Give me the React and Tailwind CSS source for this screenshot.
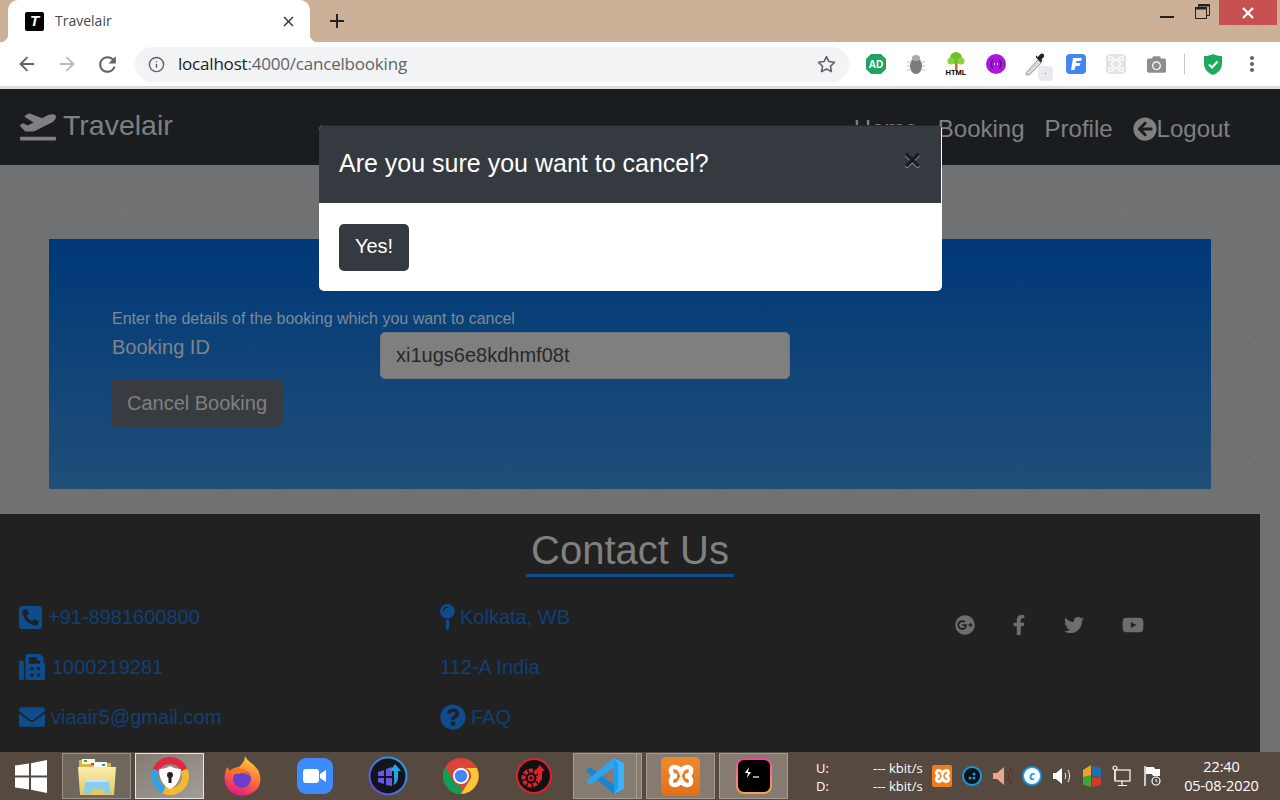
import React from 'react';
import {
  FaPlaneDeparture, FaArrowCircleLeft, FaPhoneSquareAlt, FaFax, FaEnvelope, FaMapPin,
  FaQuestionCircle, FaGooglePlus, FaFacebookF, FaTwitter, FaYoutube, FaCamera,
} from 'react-icons/fa';
import { FiArrowLeft, FiArrowRight, FiStar, FiInfo } from 'react-icons/fi';
import { MdRefresh, MdMoreVert, MdClose, MdAdd } from 'react-icons/md';

const sans = 'font-["Liberation_Sans",Arial,sans-serif]';
const ui = 'font-["Open_Sans","Noto_Sans",sans-serif]';
const bone = 'M14 11C11 4 3 5 4 10C4 14 8 15 10 15C8 15 4 16 4 20C3 25 11 26 14 19C17 26 25 25 24 20C24 16 20 15 18 15C20 15 24 14 24 10C25 5 17 4 14 11Z';

const Ext = ({ children }) => <div className="w-10 h-6 flex items-center justify-center relative">{children}</div>;

const Extensions = () => (
  <div className="flex items-center ml-[7px]">
    <Ext>
      <svg width="22" height="22" viewBox="0 0 22 22">
        <polygon points="6,1 16,1 21,6 21,16 16,21 6,21 1,16 1,6" fill="#1fa463" />
        <text x="11" y="15" textAnchor="middle" fontSize="10" fontWeight="700" fill="#fff" fontFamily="Liberation Sans">AD</text>
      </svg>
    </Ext>
    <Ext>
      <svg width="20" height="22" viewBox="0 0 20 22">
        <ellipse cx="10" cy="13" rx="6" ry="8" fill="#7c7c7c" />
        <ellipse cx="10" cy="5" rx="4" ry="3" fill="#aaa" />
        <path d="M1 9h3M1 13h3M1 17h3M16 9h3M16 13h3M16 17h3" stroke="#bbb" strokeWidth="1" />
      </svg>
    </Ext>
    <Ext>
      <svg width="30" height="26" viewBox="0 0 30 26">
        <rect x="14" y="11" width="2.500" height="8" fill="#b5761f" />
        <circle cx="15" cy="7" r="6" fill="#6fbf2a" />
        <circle cx="10" cy="10" r="3.500" fill="#8fd13f" />
        <circle cx="20" cy="10" r="3.500" fill="#8fd13f" />
        <text x="15" y="24" textAnchor="middle" fontSize="7.500" fontWeight="700" fill="#000" fontFamily="Liberation Sans">HTML</text>
      </svg>
    </Ext>
    <Ext>
      <svg width="20" height="20" viewBox="0 0 20 20">
        <circle cx="10" cy="10" r="10" fill="#a917e0" />
        <path d="M7 6c-2 0-1 4-2.500 4C6 10 5 14 7 14M13 6c2 0 1 4 2.500 4-1.500 0-.5 4-2.500 4" stroke="#3b0a52" strokeWidth="1.200" fill="none" />
        <path d="M8 10h1M11 10h1" stroke="#fff" strokeWidth="1.400" />
      </svg>
    </Ext>
    <Ext>
      <svg width="24" height="26" viewBox="0 0 22 24">
        <path d="M2 20L13 8l3 3L5 22l-3 0z" fill="#d8d8d8" stroke="#888" strokeWidth="0.800" />
        <path d="M12 6l3-3c1.500-1.500 4 0 3.500 2l-2.500 3 1 1-1.500 1.500-5-5 1.500-1.500z" fill="#222" />
      </svg>
      <div className="absolute left-[22px] top-[14px] w-[15px] h-[15px] rounded-sm bg-[#e8eaed] flex items-center justify-center">
        <div className="w-px h-px bg-[#777]" />
      </div>
    </Ext>
    <Ext>
      <div className="w-5 h-5 rounded-sm bg-[#4285f4] flex items-center justify-center">
        <svg width="14" height="14" viewBox="0 0 14 14"><path d="M4 1h9l-1 3H7.500L7 6h4.500l-1 3H6.500L5.500 13H2L4 1z" fill="#fff" /></svg>
      </div>
    </Ext>
    <Ext>
      <div className="w-5 h-5 rounded-sm bg-[#e4e4e4] flex items-center justify-center">
        <svg width="16" height="16" viewBox="0 0 16 16" fill="none" stroke="#fff" strokeWidth="1.200">
          <path d="M8 3l5 5-5 5-5-5zM1 1h4v3H1zM11 1h4v3h-4zM1 12h4v3H1zM11 12h4v3h-4z" />
        </svg>
      </div>
    </Ext>
    <Ext><FaCamera className="text-[#8e8e8e] text-[19px]" /></Ext>
    <div className="w-px h-5 bg-[#c8c8c8] ml-2 mr-[8px]" />
    <div className="w-[40px] flex justify-center">
      <svg width="18" height="21" viewBox="0 0 18 21">
        <path d="M9 0c3 1.500 5.500 2 9 2v8c0 5-4 9-9 11-5-2-9-6-9-11V2c3.500 0 6-.5 9-2z" fill="#1faa5b" />
        <path d="M5 10.500l3 3 5.500-6" stroke="#fff" strokeWidth="2" fill="none" />
      </svg>
    </div>
    <MdMoreVert className="text-[#5f6368] text-[24px] ml-[7px]" />
  </div>
);

const BrowserChrome = () => (
  <div className="shrink-0">
    <div className="h-[42px] bg-[#cdb098] flex items-start pl-2 relative">
      <div className="absolute left-0 top-[34px] w-2 h-2 bg-[radial-gradient(circle_at_0_0,transparent_8px,#fff_8.500px)]" />
      <div className="absolute left-[310px] top-[34px] w-2 h-2 bg-[radial-gradient(circle_at_100%_0,transparent_8px,#fff_8.500px)]" />
      <div className="w-[302px] h-[42px] bg-white rounded-t-[10px] flex items-center pl-[17px] pr-[13px]">
        <div className={`w-[19px] h-[19px] mr-[11px] rounded-[2px] bg-black text-white italic font-bold text-[15px] flex items-center justify-center ${sans}`}>T</div>
        <span className={`text-[14px] text-[#45494d] flex-1 pb-px ${ui}`}>Travelair</span>
        <MdClose className="text-[#333] text-[17px]" />
      </div>
      <MdAdd className="text-[#222] text-[24px] ml-[15px] mt-[9px]" />
      <div className="ml-auto flex items-start">
        <div className="w-[14px] h-[2px] bg-[#222] mt-[16px] mr-[21px]" />
        <svg width="15" height="15" viewBox="0 0 15 15" fill="none" stroke="#222" className="mt-[4px] mr-[9px]">
          <rect x="0.500" y="3.500" width="11" height="11" />
          <path d="M0 4.500h12" strokeWidth="2" />
          <path d="M3.500 3V.5h11v11H12" />
          <path d="M3 1.500h12" strokeWidth="2" />
        </svg>
        <div className="w-[58px] h-[25px] bg-[#c75050] mr-[3px] flex items-center justify-center">
          <svg width="12" height="12" viewBox="0 0 12 12"><path d="M1 1l10 10M11 1L1 11" stroke="#fff" strokeWidth="2.400" /></svg>
        </div>
      </div>
    </div>
    <div className="h-[47px] bg-white border-b-[3px] border-[#dcdcdc] flex items-center pl-[16px]">
      <FiArrowLeft className="text-[#5f6368] text-[22px]" />
      <FiArrowRight className="text-[#b8bbbe] text-[22px] ml-[18px]" />
      <MdRefresh className="text-[#5f6368] text-[25px] ml-[17px]" />
      <div className="w-[714px] h-[35px] ml-[15px] rounded-full bg-[#f1f3f4] flex items-center pl-[13px] pr-[13px]">
        <FiInfo className="text-[#5f6368] text-[17px] mr-[13px]" />
        <span className={`text-[17px] tracking-[-0.2px] text-[#202124] flex-1 ${ui}`}>localhost<span className="text-[#5f6368]">:4000/cancelbooking</span></span>
        <FiStar className="text-[#5f6368] text-[19px]" />
      </div>
      <Extensions />
    </div>
  </div>
);

const Navbar = () => (
  <nav className="h-[76px] shrink-0 bg-[#1a1d20] flex items-center pl-[20px] pr-[50px]">
    <FaPlaneDeparture className="text-[#7f8082] text-[36px] mb-[2px]" />
    <span className="text-[28.500px] ml-[7px] mb-[3px] text-[#7f8082]">Travelair</span>
    <div className="ml-auto flex items-center gap-[20px] text-[24px] text-[#808080] mt-[4px]">
      <span>Home</span>
      <span>Booking</span>
      <span>Profile</span>
      <span className="flex items-center"><FaArrowCircleLeft className="text-[24px]" />Logout</span>
    </div>
  </nav>
);

const BookingCard = () => (
  <div className="ml-[49px] mt-[74px] w-[1162px] h-[250px] bg-gradient-to-b from-[#003878] to-[#1f4f78] pl-[63px] pt-[68px]">
    <p className="text-[16px] leading-6 text-[#7d8a96]">Enter the details of the booking which you want to cancel</p>
    <div className="flex items-start">
      <label className="w-[268px] text-[20px] leading-[32px] text-[#808487]">Booking ID</label>
      <div className="w-[410px] h-[47px] mt-px pb-px bg-[#7f7f7f] border border-[#717579] rounded-[5px] pl-[15px] flex items-center text-[20px] text-[#282828]">xi1ugs6e8kdhmf08t</div>
    </div>
    <button className="w-[172px] h-[48px] -ml-px bg-[#383c40] rounded-[5px] text-[20px] text-[#808080]">Cancel Booking</button>
  </div>
);

const FooterLink = ({ icon, children, gap = 'ml-[6px]' }) => (
  <div className="h-[50px] flex items-center text-[20px] text-[#0f4077]">
    {icon}
    <span className={gap}>{children}</span>
  </div>
);

const Footer = () => (
  <footer className="w-[1260px] h-[238px] bg-[#212121] mt-[25px] overflow-hidden">
    <div className="flex flex-col items-center pt-[13px]">
      <h2 className="text-[40px] leading-[47px] px-[5px] text-[#808080] border-b-[3px] border-[#0e4b91]">Contact Us</h2>
    </div>
    <div className="flex mt-[15px] pl-[19px]">
      <div className="w-[421px]">
        <FooterLink icon={<FaPhoneSquareAlt className="text-[#0e4c8e] w-[23px] h-[27px]" />}>+91-8981600800</FooterLink>
        <FooterLink icon={<FaFax className="text-[#0e4c8e] text-[26px]" />} gap="ml-[7px]">1000219281</FooterLink>
        <FooterLink icon={<FaEnvelope className="text-[#0e4c8e] text-[26px]" />}>viaair5@gmail.com</FooterLink>
      </div>
      <div className="w-[515px]">
        <FooterLink icon={<FaMapPin className="text-[#0e4c8e] w-[15px] h-[26px]" />} gap="ml-[5px]">Kolkata, WB</FooterLink>
        <FooterLink icon={null} gap="">112-A India</FooterLink>
        <FooterLink icon={<FaQuestionCircle className="text-[#0e4c8e] text-[26px]" />} gap="ml-[5px]">FAQ</FooterLink>
      </div>
      <div className="flex items-start pt-[23px] text-[#6d6d6d]">
        <FaGooglePlus className="text-[20px]" />
        <FaFacebookF className="text-[20px] ml-[34px]" />
        <FaTwitter className="text-[20px] ml-[35px]" />
        <FaYoutube className="text-[22px] ml-[38px] -mt-px" />
      </div>
    </div>
  </footer>
);

const Modal = () => (
  <div className={`absolute left-[319px] top-[125px] w-[623px] h-[166px] rounded-[5px] overflow-hidden bg-white ${sans}`}>
    <div className="h-[78px] mr-px pb-[2px] bg-[#343a40] border-t border-[#24282c] flex items-center pl-[20px] pr-[20px]">
      <h3 className="text-[25px] text-white flex-1">Are you sure you want to cancel?</h3>
      <span className="text-[30px] font-bold text-black opacity-50 [text-shadow:0_1px_0_#fff] leading-none -mt-[8px]">×</span>
    </div>
    <div className="pt-[21px] pl-[20px]">
      <button className="w-[70px] h-[47px] pb-[3px] rounded-[5px] bg-[#343a40] text-white text-[20px]">Yes!</button>
    </div>
  </div>
);

const TaskBtn = ({ children, tone = 'plain', w = 'w-[69px]' }) => {
  const tones = {
    plain: 'border-[#a59c92] bg-[#857b70]',
    dim: 'border-[#9a928a] bg-[#6f665c]',
    active: 'border-[#e8e6e3] bg-gradient-to-br from-[#837c75] to-[#a39d97]',
  };
  return <div className={`${w} h-[46px] flex items-center justify-center border ${tones[tone]}`}>{children}</div>;
};

const Slot = ({ children }) => <div className="w-[73px] h-[46px] flex items-center justify-center">{children}</div>;

const TrayItem = ({ children }) => <div className="w-[30px] flex justify-center">{children}</div>;

const Taskbar = () => (
  <div className={`h-[48px] shrink-0 bg-[#564a40] flex items-center relative ${ui}`}>
    <div className="w-[62px] flex justify-center">
      <svg width="32" height="33" viewBox="0 0 32 33" fill="#fff">
        <path d="M0 5.500L14 3.500V15.500H0zM0 17.500H14V29.500L0 27.500zM16 3.200L32 0V15.500H16zM16 17.500H32V33L16 29.800z" />
      </svg>
    </div>
    <TaskBtn tone="dim">
      <svg width="40" height="39" viewBox="0 0 40 39">
        <defs>
          <linearGradient id="folderFront" x1="0" y1="0" x2="0" y2="1">
            <stop offset="0" stopColor="#fbeeb0" />
            <stop offset="1" stopColor="#e8c65a" />
          </linearGradient>
        </defs>
        <path d="M2 3h14l3 3h15v6H2z" fill="#d9b548" />
        <rect x="5" y="2" width="13" height="5" fill="#fdfaf0" />
        <rect x="17" y="5" width="13" height="5" fill="#fdfaf0" />
        <rect x="7" y="3" width="3" height="2" fill="#3aa53a" />
        <rect x="14" y="6" width="3" height="2" fill="#d43a2a" />
        <rect x="25" y="7" width="3" height="2" fill="#2a8ad4" />
        <path d="M1 10h38l-2 28H3z" fill="url(#folderFront)" />
        <path d="M9 22h22l3 15H6z" fill="#8accec" />
        <path d="M9 22h22v3H9z" fill="#bfe6f6" />
        <rect x="14" y="32" width="12" height="5" fill="#e8c65a" />
      </svg>
    </TaskBtn>
    <div className="w-1" />
    <TaskBtn tone="active">
      <svg width="38" height="38" viewBox="0 0 38 38" fill="none">
        <path d="M5 13A15 15 0 0 1 33 13" stroke="#e5263f" strokeWidth="7" />
        <path d="M33 13A15 15 0 0 1 13 33" stroke="#f5b82e" strokeWidth="7" />
        <path d="M5 13A15 15 0 0 0 13 33" stroke="#2da3e8" strokeWidth="6" />
        <path d="M19 9c3 2 7 3 11 3 0 9-4 17-11 20C12 29 8 21 8 12c4 0 8-1 11-3z" fill="#fff" />
        <circle cx="19" cy="18" r="3" fill="#222" />
        <rect x="17.500" y="19" width="3" height="7" fill="#222" />
      </svg>
    </TaskBtn>
    <div className="ml-px" />
    <Slot>
      <svg width="38" height="40" viewBox="0 0 38 40">
        <defs>
          <linearGradient id="foxBody" x1="0.700" y1="0" x2="0.300" y2="1">
            <stop offset="0" stopColor="#ffd43b" />
            <stop offset="0.500" stopColor="#ff7139" />
            <stop offset="1" stopColor="#e31587" />
          </linearGradient>
        </defs>
        <path d="M22 0c2 5 9 8 13 14 4 8 3 16-3 21-7 6-19 6-25 0C1 30 0 20 4 11l3 4c2-3 7-4 9-4 3-3 6-6 6-11z" fill="url(#foxBody)" />
        <circle cx="19" cy="23" r="9" fill="#6a3fc8" />
        <path d="M6 16c4-4 10-5 13-3 3 1 6 4 8 8-3-4-8-5-11-3-4 0-6-1-10-2z" fill="#f5761f" />
      </svg>
    </Slot>
    <Slot>
      <div className="w-9 h-9 rounded-[9px] bg-[#3d8bfd] flex items-center justify-center">
        <svg width="24" height="14" viewBox="0 0 24 14"><rect width="16" height="14" rx="3" fill="#fff" /><path d="M17 5l6-4v12l-6-4z" fill="#fff" /></svg>
      </div>
    </Slot>
    <Slot>
      <svg width="40" height="40" viewBox="0 0 40 40">
        <defs>
          <linearGradient id="ioRing" x1="1" y1="0" x2="0" y2="1">
            <stop offset="0" stopColor="#22a8e8" />
            <stop offset="1" stopColor="#6a45e0" />
          </linearGradient>
        </defs>
        <circle cx="20" cy="20" r="18.500" fill="#14141c" stroke="url(#ioRing)" strokeWidth="2" />
        <path d="M10 16l6-2v6h-6zM10 22h6v6l-6-2zM18 13l6-2v9h-6zM18 22h6v8l-6-1z" fill="#6a55e0" />
        <path d="M27 8l6 7h-3v6c0 4-2 7-5 8 2-3 1-6 1-8v-6h-4z" fill="#22a8e8" />
      </svg>
    </Slot>
    <Slot>
      <svg width="36" height="36" viewBox="0 0 36 36">
        <circle cx="18" cy="18" r="18" fill="#db4437" />
        <path d="M18 36A18 18 0 0 1 2.400 9L11 24a8 8 0 0 0 7 4z" fill="#0f9d58" />
        <path d="M18 10h15.800A18 18 0 0 1 18 36l8-13a8 8 0 0 0-8-13z" fill="#fcc934" />
        <circle cx="18" cy="18" r="8" fill="#fff" />
        <circle cx="18" cy="18" r="6.200" fill="#4285f4" />
      </svg>
    </Slot>
    <Slot>
      <svg width="36" height="36" viewBox="0 0 36 36">
        <circle cx="18" cy="18" r="17" fill="#111" stroke="#e0202a" strokeWidth="2" />
        <circle cx="15" cy="20" r="7.500" fill="none" stroke="#e0202a" strokeWidth="4" strokeDasharray="4 1.500" />
        <circle cx="15" cy="20" r="2.500" fill="none" stroke="#e0202a" strokeWidth="1.500" />
        <path d="M24 7l5 6h-3v8l-4 5v-13h-3z" fill="#e0202a" />
      </svg>
    </Slot>
    <div className="flex ml-[3px]">
      <TaskBtn w="w-[64px]">
        <svg width="40" height="38" viewBox="0 0 40 38">
          <path d="M1 14l4-4 24 18v9z" fill="#1a84cc" />
          <path d="M1 24l4 4L29 10V1z" fill="#2aa5f0" />
          <path d="M29 1l10 5v26l-10 5z" fill="#1f9cf0" />
          <path d="M29 1l10 5v26l-10 5 4-6V7z" fill="#3db1f5" />
        </svg>
      </TaskBtn>
      <div className="w-[5px] h-[46px] border border-l-0 border-[#a59c92] bg-[#857b70]" />
    </div>
    <div className="w-1" />
    <TaskBtn>
      <div className="w-[39px] h-[39px] rounded-[5px] bg-gradient-to-b from-[#f08a2e] to-[#e0701a] flex items-center justify-center">
        <svg width="30" height="30" viewBox="0 0 28 30" fill="none" stroke="#fff" strokeWidth="4.500"><path d={bone} /></svg>
      </div>
    </TaskBtn>
    <div className="w-1" />
    <TaskBtn>
      <div className="w-[36px] h-[36px] rounded-[8px] p-[2px] bg-gradient-to-b from-[#f0409c] to-[#f5a742]">
        <div className="w-full h-full rounded-[6px] bg-black flex items-start pt-[7px] pl-[6px]">
          <svg width="16" height="12" viewBox="0 0 16 12">
            <path d="M5 0L1 6h3L3 11l4-6H4z" fill="#fff" />
            <path d="M9 10h6" stroke="#fff" strokeWidth="1.200" />
          </svg>
        </div>
      </div>
    </TaskBtn>
    <div className="ml-[28px] w-[57px] text-[13px] leading-[18px] pt-[2px] text-white">
      <div>U:</div>
      <div>D:</div>
    </div>
    <div className="w-[54px] text-[13px] leading-[18px] pt-[2px] text-white whitespace-nowrap">
      <div>--- kbit/s</div>
      <div>--- kbit/s</div>
    </div>
    <div className="flex items-center">
      <TrayItem>
        <div className="w-[20px] h-[22px] rounded-[2px] bg-[#f07c1e] flex items-center justify-center">
          <svg width="17" height="18" viewBox="0 0 28 30" fill="none" stroke="#fff" strokeWidth="5"><path d={bone} /></svg>
        </div>
      </TrayItem>
      <TrayItem>
        <div className="w-[20px] h-[20px] rounded-full bg-[#111] border-2 border-[#0f9be8] flex items-center justify-center">
          <svg width="10" height="10" viewBox="0 0 10 10" fill="#0f9be8"><circle cx="3" cy="7" r="1.500" /><circle cx="7" cy="3" r="1.500" /><circle cx="7" cy="7" r="1.500" /></svg>
        </div>
      </TrayItem>
      <TrayItem>
        <svg width="20" height="22" viewBox="0 0 20 22">
          <path d="M1 8h4l7-6v18l-7-6H1z" fill="#e8a68f" />
          <path d="M15 6c2 3 2 7 0 10M18 3c3 5 3 11 0 16" stroke="#6b2a1c" strokeWidth="1.300" fill="none" />
        </svg>
      </TrayItem>
      <TrayItem>
        <div className="w-[20px] h-[20px] rounded-full border-2 border-[#0f9be8] bg-white flex items-center justify-center text-[#0f9be8] italic font-bold text-[12px] leading-none">c</div>
      </TrayItem>
      <TrayItem>
        <svg width="20" height="20" viewBox="0 0 20 20">
          <path d="M1 7h3l6-5v16l-6-5H1z" fill="#fff" />
          <path d="M13 7c1 2 1 4 0 6M16 4c2 4 2 8 0 12" stroke="#fff" strokeWidth="1" fill="none" />
        </svg>
      </TrayItem>
      <TrayItem>
        <svg width="20" height="24" viewBox="0 0 20 24">
          <path d="M1 6l8-5v22l-8-3z" fill="#e8a52a" />
          <path d="M1 13l8-2v12l-8-3z" fill="#3aa53a" />
          <path d="M10 2l9 2v9l-9-1z" fill="#1f6fb2" />
          <path d="M10 13l9 1v7l-9 2z" fill="#d43a2a" />
        </svg>
      </TrayItem>
      <TrayItem>
        <svg width="20" height="22" viewBox="0 0 20 22" fill="none" stroke="#fff" strokeWidth="1.200">
          <rect x="3" y="5" width="15" height="11" />
          <path d="M10 16v4M6 20.500h9" />
          <circle cx="3" cy="3" r="2" fill="#564a40" />
          <path d="M3 5v10" />
        </svg>
      </TrayItem>
      <TrayItem>
        <svg width="18" height="22" viewBox="0 0 18 22" fill="none">
          <path d="M2 1v20" stroke="#fff" strokeWidth="1.400" />
          <path d="M3 2h8l1 2h5v7h-7l-1-2H3z" fill="#fff" />
          <circle cx="13" cy="16" r="4" stroke="#fff" strokeWidth="1.200" fill="#564a40" />
          <path d="M13 14v2l1.500 1" stroke="#fff" />
        </svg>
      </TrayItem>
    </div>
    <div className="flex-1 pr-[4px] text-center text-white text-[14.500px] leading-[19px] tracking-[-0.1px]">
      <div>22:40</div>
      <div>05-08-2020</div>
    </div>
  </div>
);

export default function App() {
  return (
    <div className={`w-[1280px] h-[800px] overflow-hidden relative flex flex-col bg-[#707173] ${sans}`}>
      <BrowserChrome />
      <div className="flex-1 min-h-0 overflow-hidden relative bg-[#707173] bg-[repeating-linear-gradient(45deg,transparent_0,transparent_26.600px,rgba(255,255,255,0.014)_26.600px,rgba(255,255,255,0.014)_28.600px,transparent_28.600px,transparent_88.390px),repeating-linear-gradient(315deg,transparent_0,transparent_47.800px,rgba(255,255,255,0.014)_47.800px,rgba(255,255,255,0.014)_49.800px,transparent_49.800px,transparent_88.390px)]">
        <Navbar />
        <BookingCard />
        <Footer />
      </div>
      <Taskbar />
      <Modal />
    </div>
  );
}
